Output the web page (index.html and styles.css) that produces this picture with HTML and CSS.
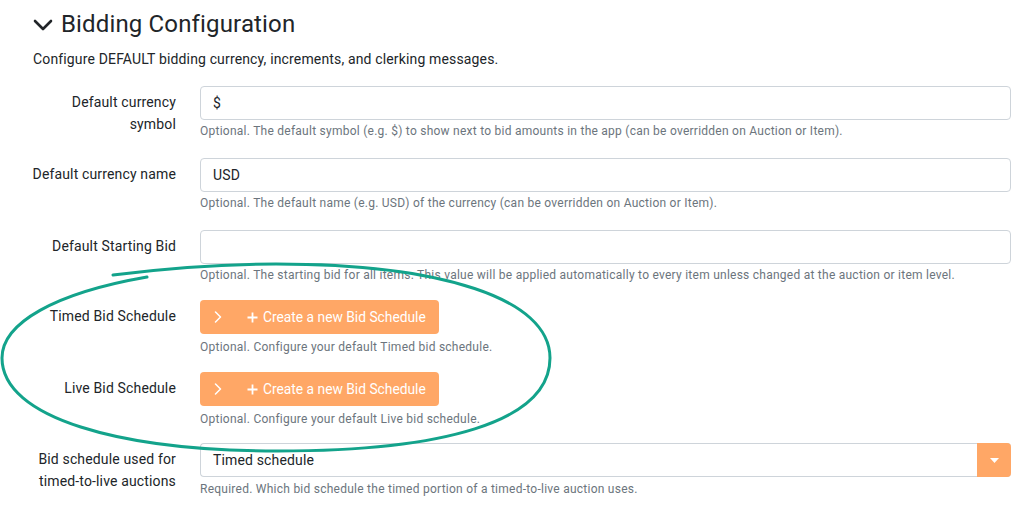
FILE: index.html
```html
<!DOCTYPE html>
<html>
<head>
    <title>Bidding Configuration</title>
    <meta name="viewport" content="width=device-width, initial-scale=1">
    <link rel="stylesheet" href="styles.css">
</head>
<body>
    <div class="page">
        <section class="config">
            <h2 class="config-title">
                <svg class="caret" width="20" height="12" viewBox="0 0 20 12"><polyline points="2,2 10,10 18,2" fill="none" stroke="#212529" stroke-width="2.6" stroke-linecap="round" stroke-linejoin="round"/></svg>
                Bidding Configuration
            </h2>
            <p class="config-intro">Configure DEFAULT bidding currency, increments, and clerking messages.</p>

            <form class="config-form">
                <div class="field">
                    <label class="field-label" for="currency-symbol">Default currency symbol</label>
                    <div class="field-body">
                        <input class="text-input" type="text" id="currency-symbol" value="$">
                        <small class="field-help">Optional. The default symbol (e.g. $) to show next to bid amounts in the app (can be overridden on Auction or Item).</small>
                    </div>
                </div>

                <div class="field">
                    <label class="field-label" for="currency-name">Default currency name</label>
                    <div class="field-body">
                        <input class="text-input" type="text" id="currency-name" value="USD">
                        <small class="field-help">Optional. The default name (e.g. USD) of the currency (can be overridden on Auction or Item).</small>
                    </div>
                </div>

                <div class="field">
                    <label class="field-label" for="starting-bid">Default Starting Bid</label>
                    <div class="field-body">
                        <input class="text-input" type="text" id="starting-bid" value="">
                        <small class="field-help">Optional. The starting bid for all items. This value will be applied automatically to every item unless changed at the auction or item level.</small>
                    </div>
                </div>

                <div class="field field-schedule">
                    <label class="field-label">Timed Bid Schedule</label>
                    <div class="field-body">
                        <button type="button" class="schedule-btn">
                            <svg class="btn-chevron" width="8" height="12" viewBox="0 0 8 12"><polyline points="1.5,1 6.5,6 1.5,11" fill="none" stroke="#fff" stroke-width="1.5" stroke-linecap="round" stroke-linejoin="round"/></svg>
                            <svg class="btn-plus" width="11" height="11" viewBox="0 0 11 11"><path d="M5.5 0.5v10M0.5 5.5h10" stroke="#fff" stroke-width="1.8"/></svg>
                            <span>Create a new Bid Schedule</span>
                        </button>
                        <small class="field-help">Optional. Configure your default Timed bid schedule.</small>
                    </div>
                </div>

                <div class="field field-schedule">
                    <label class="field-label">Live Bid Schedule</label>
                    <div class="field-body">
                        <button type="button" class="schedule-btn">
                            <svg class="btn-chevron" width="8" height="12" viewBox="0 0 8 12"><polyline points="1.5,1 6.5,6 1.5,11" fill="none" stroke="#fff" stroke-width="1.5" stroke-linecap="round" stroke-linejoin="round"/></svg>
                            <svg class="btn-plus" width="11" height="11" viewBox="0 0 11 11"><path d="M5.5 0.5v10M0.5 5.5h10" stroke="#fff" stroke-width="1.8"/></svg>
                            <span>Create a new Bid Schedule</span>
                        </button>
                        <small class="field-help">Optional. Configure your default Live bid schedule.</small>
                    </div>
                </div>

                <div class="field field-select">
                    <label class="field-label">Bid schedule used for timed-to-live auctions</label>
                    <div class="field-body">
                        <div class="select">
                            <span class="select-value">Timed schedule</span>
                            <span class="select-toggle"><svg width="9" height="5" viewBox="0 0 9 5"><polygon points="0,0 9,0 4.5,5" fill="#fff"/></svg></span>
                        </div>
                        <small class="field-help">Required. Which bid schedule the timed portion of a timed-to-live auction uses.</small>
                    </div>
                </div>
            </form>
        </section>

        <!-- hand-drawn marker loop around the schedule fields -->
        <svg class="marker" width="1031" height="523" viewBox="0 0 1031 523">
            <path d="M113,267 C160,261 215,256 276,256 C440,256 550,290 550,350 C550,415 440,443 278,443 C120,443 2,410 2,350 C2,315 55,285 147,269"
                  fill="none" stroke="#13a38b" stroke-width="3" stroke-linecap="round"/>
        </svg>
    </div>
</body>
</html>
```

FILE: styles.css
```css
body {
    margin: 0;
    padding: 0;
    background-color: #ffffff;
    font-family: Roboto, "Liberation Sans", sans-serif;
    color: #212529;
    letter-spacing: 0.15px;
    overflow: hidden;
}
.page {
    position: relative;
    width: 1031px;
    height: 523px;
}
.config-title {
    display: flex;
    align-items: center;
    gap: 8px;
    margin: 8px 0 0 0;
    padding-left: 33px;
    font-size: 24px;
    font-weight: 400;
    line-height: 32px;
}
.caret {
    margin-top: 2px;
}
.config-intro {
    margin: 9px 0 0 0;
    padding-left: 33px;
    font-size: 14px;
    line-height: 21px;
}
.config-form {
    display: flex;
    flex-direction: column;
    gap: 18px;
    margin-top: 16px;
    padding: 0 20px 0 28px;
}
.field {
    display: grid;
    grid-template-columns: 148px 1fr;
    column-gap: 24px;
}
.field-schedule {
    margin-top: -2px;
}
.field-select {
    margin-top: -3px;
}
.field-label {
    padding-top: 5px;
    text-align: right;
    font-size: 14px;
    line-height: 22px;
}
.field-body {
    display: flex;
    flex-direction: column;
    align-items: flex-start;
}
.text-input {
    box-sizing: border-box;
    width: 100%;
    height: 34px;
    padding: 0 12px;
    border: 1px solid #ced4da;
    border-radius: 4px;
    font-family: inherit;
    font-size: 14px;
    letter-spacing: inherit;
    color: #212529;
    outline: none;
}
.field-help {
    margin-top: 3px;
    font-size: 12px;
    line-height: 17px;
    letter-spacing: 0.25px;
    color: #6c757d;
}
.field-schedule .field-help {
    margin-top: 5px;
}
.field-select .field-help {
    margin-top: 4px;
}
.schedule-btn {
    display: flex;
    align-items: center;
    height: 34px;
    padding: 0 13px 0 14px;
    border: none;
    border-radius: 4px;
    background-color: #ffa766;
    color: #ffffff;
    font-family: inherit;
    font-size: 13.8px;
    letter-spacing: 0;
    cursor: pointer;
}
.btn-chevron {
    margin-right: 25px;
}
.btn-plus {
    margin-right: 5px;
}
.select {
    box-sizing: border-box;
    display: flex;
    align-items: stretch;
    width: 100%;
    height: 34px;
    border: 1px solid #ced4da;
    border-right: none;
    border-radius: 4px;
}
.select-value {
    flex: 1;
    display: flex;
    align-items: center;
    padding-left: 12px;
    font-size: 14px;
}
.select-toggle {
    display: flex;
    align-items: center;
    justify-content: center;
    width: 34px;
    margin: -1px 0;
    background-color: #ffa766;
    border-radius: 0 4px 4px 0;
}
.marker {
    position: absolute;
    top: 0;
    left: 0;
    pointer-events: none;
}
```
